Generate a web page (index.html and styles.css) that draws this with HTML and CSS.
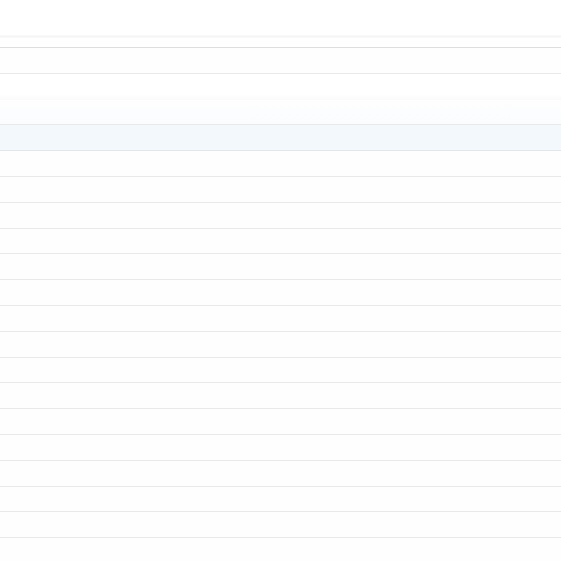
FILE: index.html
```
<!DOCTYPE html>
<html>
<head>
<meta charset="utf-8">
<link rel="stylesheet" href="styles.css">
</head>
<body>
<div class="page">
  <div class="header"></div>
  <div class="header-shadow"></div>
  <div class="gap"></div>
  <div class="list">
    <div class="row"></div>
    <div class="row soft"></div>
    <div class="row faint"></div>
    <div class="row selected"></div>
    <div class="row"></div>
    <div class="row"></div>
    <div class="row"></div>
    <div class="row"></div>
    <div class="row"></div>
    <div class="row"></div>
    <div class="row"></div>
    <div class="row"></div>
    <div class="row"></div>
    <div class="row"></div>
    <div class="row"></div>
    <div class="row"></div>
    <div class="row"></div>
    <div class="row"></div>
    <div class="row"></div>
    <div class="row"></div>
  </div>
</div>
</body>
</html>
```
FILE: styles.css
```
html, body {
  margin: 0;
  padding: 0;
  background: #ffffff;
  font-family: "Liberation Sans", Arial, sans-serif;
}
.page {
  width: 561px;
  height: 561px;
  overflow: hidden;
  display: flex;
  flex-direction: column;
}
.header {
  height: 35px;
  flex: none;
}
.header-shadow {
  height: 3px;
  flex: none;
  background: linear-gradient(#fbfbfb, #f5f5f5, #fbfbfb);
}
.gap {
  height: 9px;
  flex: none;
  border-bottom: 1px solid #dedede;
}
.list {
  display: flex;
  flex-direction: column;
}
.row {
  height: 24.8px;
  flex: none;
  border-bottom: 1px solid #e9e9e9;
  background: #fefefe;
}
.row.soft {
  background: linear-gradient(#ffffff 80%, #fbfbfb);
  border-bottom-color: #fafafa;
}
.row.faint {
  background: linear-gradient(#fefefe, #fafcfe);
}
.row.selected {
  background: #f3f8fd;
  border-bottom-color: #e3e6ea;
}
```
